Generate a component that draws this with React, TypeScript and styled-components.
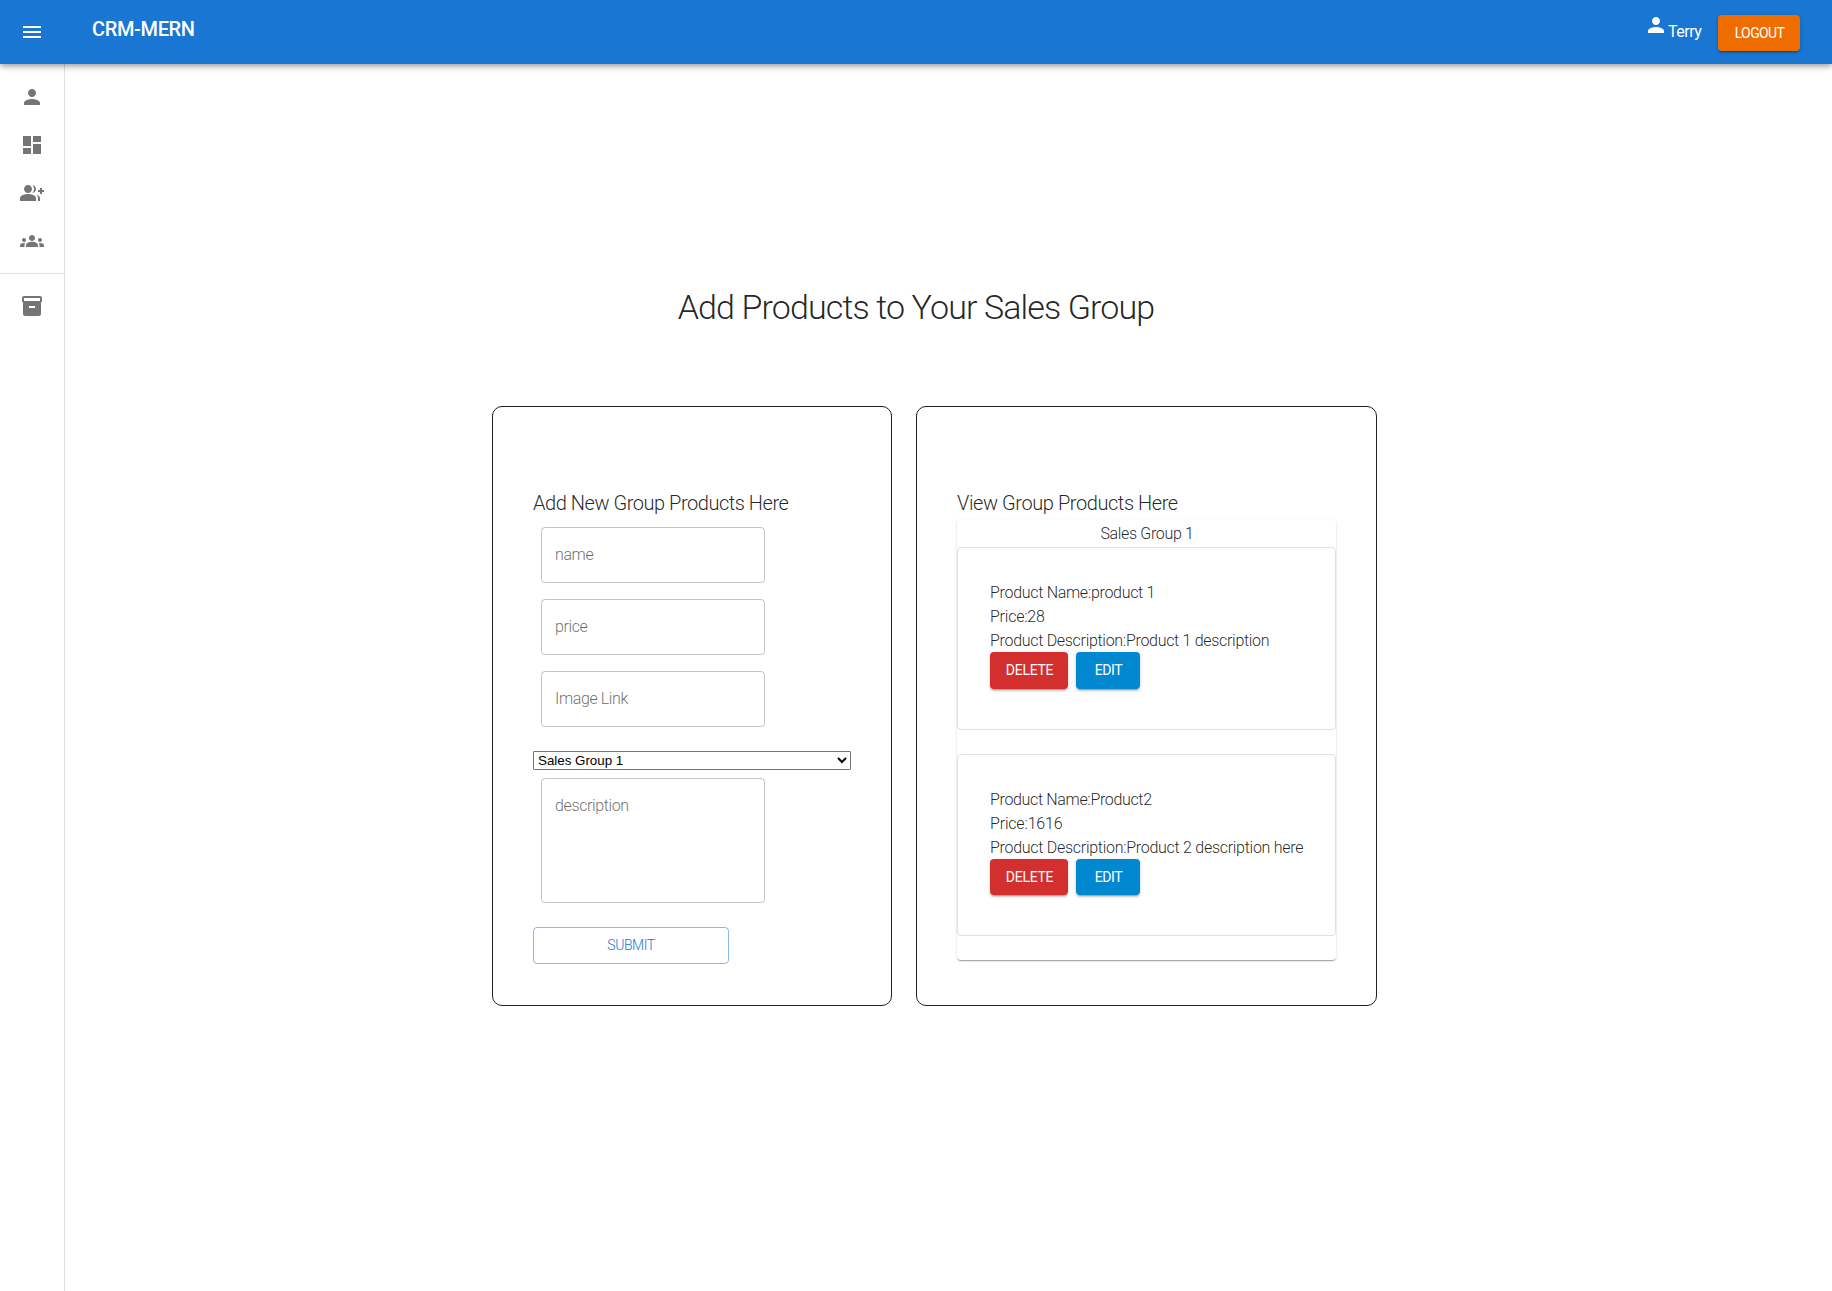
import React from "react";
import styled, { createGlobalStyle } from "styled-components";
import { MdDashboard, MdGroupAdd, MdGroups, MdInventory2, MdMenu, MdPerson } from "react-icons/md";

const GlobalStyle = createGlobalStyle`
  *, *::before, *::after { box-sizing: border-box; }
  body {
    margin: 0;
    background: #fff;
    color: rgba(0, 0, 0, 0.87);
    font-family: Roboto, "Liberation Sans", sans-serif;
    font-weight: 300;
    font-size: 16px;
    line-height: 24px;
  }
`;

const Page = styled.div`
  display: flex;
  flex-direction: column;
  height: 1291px;
  overflow: hidden;
`;

const AppBar = styled.header`
  position: relative;
  z-index: 1;
  flex: none;
  display: flex;
  align-items: flex-start;
  height: 64px;
  padding: 0 32px 0 20px;
  background: #1976d2;
  color: #fff;
  box-shadow: 0 2px 4px -1px rgba(0, 0, 0, 0.2), 0 4px 5px rgba(0, 0, 0, 0.14),
    0 1px 10px rgba(0, 0, 0, 0.12);
`;

const MenuButton = styled.button`
  display: flex;
  padding: 0;
  margin: 20px 48px 0 0;
  border: 0;
  background: none;
  color: inherit;
`;

const Brand = styled.div`
  flex: 1;
  padding-top: 13px;
  font-size: 20px;
  font-weight: 500;
  line-height: 32px;
  letter-spacing: -0.35px;
`;

const UserIcon = styled.span`
  display: flex;
  padding-top: 13px;
`;

const UserName = styled.span`
  padding-top: 20px;
  margin-right: 16px;
  width: 34px;
  font-weight: 400;
  letter-spacing: -0.5px;
`;

const Button = styled.button<{ $bg: string; $width: number; $spacing: number }>`
  width: ${(p) => p.$width}px;
  height: 36.5px;
  padding: 0 0 0 1px;
  border: 0;
  border-radius: 4px;
  background: ${(p) => p.$bg};
  color: #fff;
  font: 400 14px/24.5px Roboto, "Liberation Sans", sans-serif;
  letter-spacing: ${(p) => p.$spacing}px;
  text-transform: uppercase;
  box-shadow: 0 3px 1px -2px rgba(0, 0, 0, 0.2), 0 2px 2px rgba(0, 0, 0, 0.14),
    0 1px 5px rgba(0, 0, 0, 0.12);
`;

const LogoutSlot = styled.div`
  display: flex;
  padding-top: 14.75px;
`;

const Body = styled.div`
  flex: 1;
  display: flex;
`;

const Drawer = styled.nav`
  width: 65px;
  padding-top: 1px;
  border-right: 1px solid rgba(0, 0, 0, 0.12);
  color: #757575;
`;

const NavList = styled.div`
  padding: 8px 0;

  & + & {
    border-top: 1px solid rgba(0, 0, 0, 0.12);
  }
`;

const NavItem = styled.a`
  display: flex;
  align-items: center;
  height: 48px;
  padding-left: 20px;
`;

const Main = styled.main`
  flex: 1;
  display: flex;
  flex-direction: column;
  align-items: center;
  padding: 222px 65px 0 0;
`;

const Title = styled.h1`
  margin: 0 0 78px;
  font-size: 34px;
  font-weight: 300;
  line-height: 42px;
  letter-spacing: -0.88px;
`;

const Cards = styled.div`
  display: flex;
  gap: 24px;
  margin-left: 37px;
`;

const Card = styled.section<{ $width: number }>`
  width: ${(p) => p.$width}px;
  height: 600px;
  padding: 80px 40px 0;
  border: 1px solid #212121;
  border-radius: 10px;
`;

const CardTitle = styled.h2<{ $spacing: number }>`
  margin: 0;
  font-size: 20px;
  font-weight: 300;
  line-height: 32px;
  letter-spacing: ${(p) => p.$spacing}px;
`;

const Form = styled.form`
  display: flex;
  flex-direction: column;
  align-items: flex-start;
`;

const Field = styled.input`
  width: 224px;
  height: 56px;
  margin: 8px;
  padding: 0 13px 2px;
  border: 1px solid rgba(0, 0, 0, 0.23);
  border-radius: 4px;
  background: none;
  color: inherit;
  font: inherit;
  letter-spacing: -0.38px;

  &::placeholder {
    color: rgba(0, 0, 0, 0.6);
    opacity: 1;
  }
`;

const TextArea = styled(Field).attrs({ as: "textarea" })`
  display: block;
  height: 125px;
  padding: 15px 13px;
  resize: none;
`;

const GroupSelect = styled.select`
  width: 318px;
  height: 19px;
  margin: 16px 0 0;
  border: 1px solid #767676;
  border-radius: 1px;
  background: #fff;
  color: #000;
  font: 400 13.333px "Liberation Sans", Arial, sans-serif;
`;

const SubmitButton = styled.button`
  width: 196px;
  height: 36.5px;
  margin: 16px 0 0;
  padding: 0;
  border: 1px solid rgba(25, 118, 210, 0.5);
  border-radius: 4px;
  background: none;
  color: #1976d2;
  font: 300 14px/24.5px Roboto, "Liberation Sans", sans-serif;
  letter-spacing: -0.45px;
`;

const GroupPaper = styled.div`
  border-radius: 4px;
  width: 379px;
  height: 441px;
  box-shadow: 0 2px 1px -1px rgba(0, 0, 0, 0.2), 0 1px 1px rgba(0, 0, 0, 0.14),
    0 1px 3px rgba(0, 0, 0, 0.12);
`;

const GroupName = styled.div`
  height: 28px;
  padding: 1px 0 0 1px;
  line-height: 28px;
  text-align: center;
  letter-spacing: -0.33px;
`;

const ProductCard = styled.article`
  height: 182.5px;
  margin-bottom: 24px;
  padding: 32px;
  border: 1px solid rgba(0, 0, 0, 0.12);
  border-radius: 4px;
`;

const ProductInfo = styled.div`
  height: 72px;
  padding-top: 1px;
  white-space: nowrap;
`;

const ProductLine = styled.div<{ $spacing: number }>`
  letter-spacing: ${(p) => p.$spacing}px;
`;

const Actions = styled.div`
  display: flex;
  gap: 8px;
`;

const products = [
  { name: "product 1", price: "28", description: "Product 1 description", spacing: [-0.3, -0.23, -0.3] },
  { name: "Product2", price: "1616", description: "Product 2 description here", spacing: [-0.34, -0.18, -0.28] },
];

const mainNav = [MdPerson, MdDashboard, MdGroupAdd, MdGroups];

export default function App() {
  return (
    <Page>
      <GlobalStyle />
      <AppBar>
        <MenuButton aria-label="menu">
          <MdMenu size={24} />
        </MenuButton>
        <Brand>CRM-MERN</Brand>
        <UserIcon>
          <MdPerson size={24} />
        </UserIcon>
        <UserName>Terry</UserName>
        <LogoutSlot>
          <Button $bg="#ef6c00" $width={82} $spacing={-0.6}>
            Logout
          </Button>
        </LogoutSlot>
      </AppBar>
      <Body>
        <Drawer>
          <NavList>
            {mainNav.map((Icon, i) => (
              <NavItem key={i}>
                <Icon size={24} />
              </NavItem>
            ))}
          </NavList>
          <NavList>
            <NavItem>
              <MdInventory2 size={24} />
            </NavItem>
          </NavList>
        </Drawer>
        <Main>
          <Title>Add Products to Your Sales Group</Title>
          <Cards>
            <Card $width={400}>
              <CardTitle $spacing={-0.46}>Add New Group Products Here</CardTitle>
              <Form>
                <Field placeholder="name" />
                <Field placeholder="price" />
                <Field placeholder="Image Link" />
                <GroupSelect>
                  <option>Sales Group 1</option>
                </GroupSelect>
                <TextArea placeholder="description" />
                <SubmitButton type="button">SUBMIT</SubmitButton>
              </Form>
            </Card>
            <Card $width={461}>
              <CardTitle $spacing={-0.42}>View Group Products Here</CardTitle>
              <GroupPaper>
                <GroupName>Sales Group 1</GroupName>
                {products.map((p) => (
                  <ProductCard key={p.name}>
                    <ProductInfo>
                      <ProductLine $spacing={p.spacing[0]}>Product Name:{p.name}</ProductLine>
                      <ProductLine $spacing={p.spacing[1]}>Price:{p.price}</ProductLine>
                      <ProductLine $spacing={p.spacing[2]}>Product Description:{p.description}</ProductLine>
                    </ProductInfo>
                    <Actions>
                      <Button $bg="#d32f2f" $width={78} $spacing={-0.3}>
                        Delete
                      </Button>
                      <Button $bg="#0288d1" $width={64} $spacing={-0.4}>
                        Edit
                      </Button>
                    </Actions>
                  </ProductCard>
                ))}
              </GroupPaper>
            </Card>
          </Cards>
        </Main>
      </Body>
    </Page>
  );
}
